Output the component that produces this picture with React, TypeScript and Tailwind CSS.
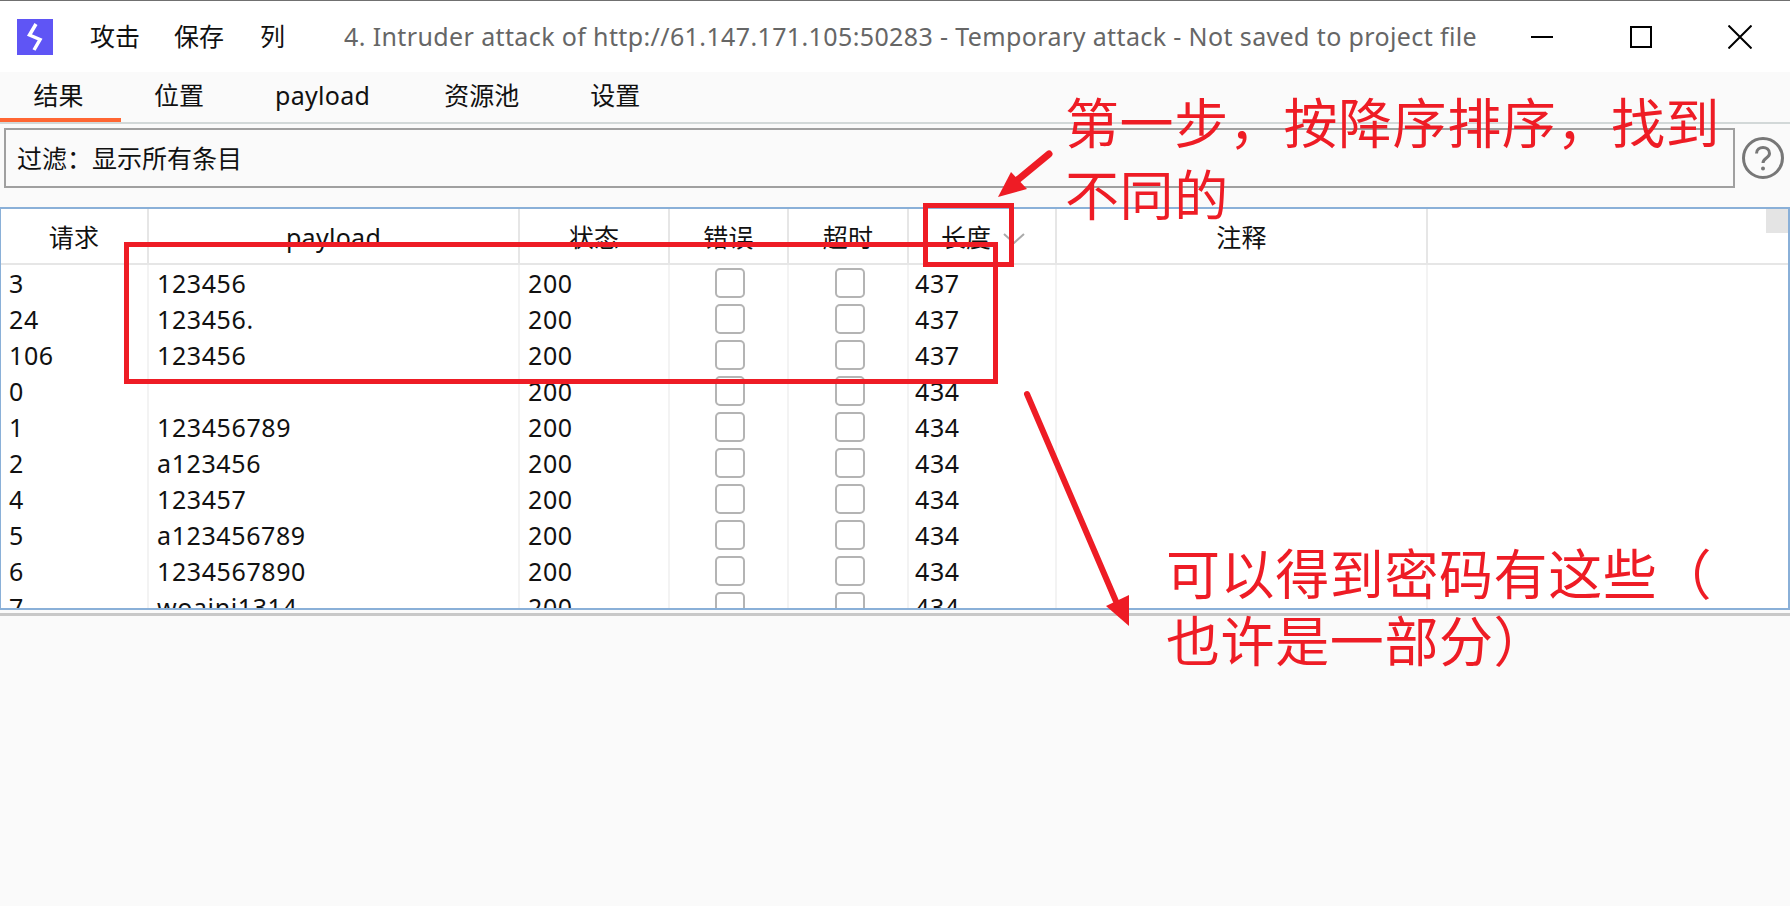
const rows = [
  { id: '3', payload: '123456', status: '200', length: '437' },
  { id: '24', payload: '123456.', status: '200', length: '437' },
  { id: '106', payload: '123456', status: '200', length: '437' },
  { id: '0', payload: '', status: '200', length: '434' },
  { id: '1', payload: '123456789', status: '200', length: '434' },
  { id: '2', payload: 'a123456', status: '200', length: '434' },
  { id: '4', payload: '123457', status: '200', length: '434' },
  { id: '5', payload: 'a123456789', status: '200', length: '434' },
  { id: '6', payload: '1234567890', status: '200', length: '434' },
  { id: '7', payload: 'woaini1314', status: '200', length: '434' },
]

const columns = 'grid grid-cols-[148px_371px_150px_119px_120px_148px_371px_1fr]'

function HeaderCell({ label, last = false }: { label: string; last?: boolean }) {
  return (
    <div className={`flex items-center justify-center pt-1 tracking-[0.3px] ${last ? '' : 'border-r-2 border-[#e6e6e6]'}`}>{label}</div>
  )
}

function Checkbox() {
  return <div className="h-[30px] w-[30px] rounded-[5px] border-2 border-[#b4b4b4] bg-white" />
}

function Row({ row }: { row: (typeof rows)[number] }) {
  const cell = 'flex h-9 items-center border-r-2 border-[#f3f3f3]'
  return (
    <div className={columns}>
      <div className={`${cell} pl-[8px] pt-0.5`}>{row.id}</div>
      <div className={`${cell} pl-[8px] pt-0.5`}>{row.payload}</div>
      <div className={`${cell} pl-[8px] pt-0.5`}>{row.status}</div>
      <div className={`${cell} justify-center pl-[3px]`}><Checkbox /></div>
      <div className={`${cell} justify-center pl-[3px]`}><Checkbox /></div>
      <div className={`${cell} pl-[6px] pt-0.5`}>{row.length}</div>
      <div className={cell} />
      <div />
    </div>
  )
}

function Annotations() {
  return (
    <>
      <div className="absolute left-[124px] top-[242px] h-[142px] w-[874px] border-[5px] border-[#ee1c25]" />
      <div className="absolute left-[923px] top-[203px] h-[64px] w-[91px] border-[5px] border-[#ee1c25]" />
      <svg className="absolute left-0 top-0 h-[906px] w-[1790px]" viewBox="0 0 1790 906" fill="none">
        <path d="M1049 154 L1015 182" stroke="#ee1c25" strokeWidth="7" strokeLinecap="round" />
        <path d="M998 197 L1011 172 L1027 189 Z" fill="#ee1c25" />
        <path d="M1027 394 L1118 606" stroke="#ee1c25" strokeWidth="6" strokeLinecap="round" />
        <path d="M1129 626 L1106 606 L1129 595 Z" fill="#ee1c25" />
      </svg>
      <div className="absolute left-[1065px] top-[87px] w-[700px] text-[54px] leading-[72px] text-[#ee1c25]">
        第一步，按降序排序，找到
        <br />
        不同的
      </div>
      <div className="absolute left-[1166px] top-[541px] w-[600px] text-[54px] leading-[67px] text-[#ee1c25]">
        可以得到密码有这些（
        <br />
        也许是一部分）
      </div>
    </>
  )
}

export default function App() {
  return (
    <div className="relative flex h-[906px] w-[1790px] flex-col overflow-hidden bg-[#fafafa] font-['Noto_Sans','Noto_Sans_CJK_SC',sans-serif] text-[25px] text-[#111] tracking-[0.6px]">
      <header className="flex h-[72px] items-center border-t border-[#707070] bg-white tracking-normal">
        <div className="ml-[17px] flex h-9 w-9 items-center justify-center bg-[#5f55f5]">
          <svg viewBox="0 0 36 36" className="h-9 w-9" fill="none" stroke="#fff" strokeWidth="3.5" strokeLinejoin="miter">
            <path d="M19 5 L12.5 16 L23 20.5 L17 31" />
          </svg>
        </div>
        <nav className="ml-[37px] flex">
          <span>攻击</span>
          <span className="ml-[34px]">保存</span>
          <span className="ml-[36px]">列</span>
        </nav>
        <div className="ml-[59px] whitespace-nowrap tracking-[0.38px] text-[#666]">
          4. Intruder attack of http://61.147.171.105:50283 - Temporary attack - Not saved to project file
        </div>
        <div className="ml-auto flex items-center">
          <div className="mr-[77px] h-0.5 w-[22px] bg-black" />
          <div className="mr-[76px] h-[22px] w-[22px] border-2 border-black" />
          <svg viewBox="0 0 24 24" className="mr-[38px] h-6 w-6" stroke="#000" strokeWidth="2">
            <path d="M0.5 0.5 L23.5 23.5 M23.5 0.5 L0.5 23.5" />
          </svg>
        </div>
      </header>

      <div className="flex h-[52px] border-b-2 border-[#d2d8d8] pt-0.5 tracking-normal">
        <div className="flex h-[48px] w-[121px] items-center justify-center border-b-4 border-[#ff6633] pr-1">结果</div>
        <div className="ml-[33px] flex items-center pb-1">位置</div>
        <div className="ml-[71px] flex items-center pb-1 tracking-[0.3px]">payload</div>
        <div className="ml-[74px] flex items-center pb-1">资源池</div>
        <div className="ml-[71px] flex items-center pb-1">设置</div>
      </div>

      <div className="mt-1 flex h-[60px] items-center tracking-normal">
        <div className="ml-1 flex h-[60px] w-[1731px] items-center border-2 border-[#a0a0a0] pl-[11px] pt-0.5">过滤：显示所有条目</div>
        <svg viewBox="0 0 42 42" className="ml-[7px] h-[42px] w-[42px]" fill="none" stroke="#777" strokeWidth="3">
          <circle cx="21" cy="21" r="19.5" />
          <path d="M14.5 16.5 C14.5 8.5 27.5 8.5 27.5 16.5 C27.5 21 21 21 21 26" />
          <circle cx="21" cy="31.5" r="2" fill="#777" stroke="none" />
        </svg>
      </div>

      <div className="relative mt-[19px] h-[403px] overflow-hidden border-2 border-l border-[#8ab0d8] bg-white">
        <div className={`${columns} h-14 border-b-2 border-[#e6e6e6]`}>
          <HeaderCell label="请求" />
          <HeaderCell label="payload" />
          <HeaderCell label="状态" />
          <HeaderCell label="错误" />
          <HeaderCell label="超时" />
          <div className="flex items-center justify-start gap-[12px] border-r-2 border-[#e6e6e6] pl-[32px] pt-1 tracking-normal">
            <span>长度</span>
            <svg viewBox="0 0 22 11" className="h-[11px] w-[22px]" fill="none" stroke="#aaa" strokeWidth="2">
              <path d="M1 1 L11 10 L21 1" />
            </svg>
          </div>
          <HeaderCell label="注释" />
          <HeaderCell label="" last />
        </div>
        {rows.map((row) => (
          <Row key={row.id} row={row} />
        ))}
        <div className="absolute right-0 top-0 h-6 w-[22px] bg-[#e4e4e4]" />
      </div>
      <div className="mt-[3px] h-[3px] bg-[#c8c8c8]" />

      <Annotations />
    </div>
  )
}
